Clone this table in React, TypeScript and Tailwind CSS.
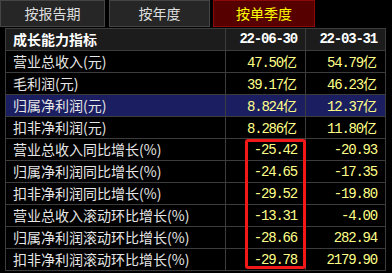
import React from 'react'

const rows = [
  { label: '营业总收入(元)', a: '47.50亿', b: '54.79亿' },
  { label: '毛利润(元)', a: '39.17亿', b: '46.23亿' },
  { label: '归属净利润(元)', a: '8.824亿', b: '12.37亿', active: true },
  { label: '扣非净利润(元)', a: '8.286亿', b: '11.80亿' },
  { label: '营业总收入同比增长(%)', a: '-25.42', b: '-20.93' },
  { label: '归属净利润同比增长(%)', a: '-24.65', b: '-17.35' },
  { label: '扣非净利润同比增长(%)', a: '-29.52', b: '-19.80' },
  { label: '营业总收入滚动环比增长(%)', a: '-13.31', b: '-4.00' },
  { label: '归属净利润滚动环比增长(%)', a: '-28.66', b: '282.94' },
  { label: '扣非净利润滚动环比增长(%)', a: '-29.78', b: '2179.90' },
]

const cjk = { fontFamily: '"Noto Sans CJK SC", sans-serif' }
const num = { fontFamily: '"Liberation Mono", "Noto Sans CJK SC", monospace' }

function Value({ text }: { text: string }) {
  const yi = text.endsWith('亿')
  const n = yi ? text.slice(0, -1) : text
  return (
    <span className="flex items-baseline text-[14px] leading-[20px] text-[#ffff88]">
      <span style={num} className="tracking-[-1.2px]">
        {n}
      </span>
      {yi && <span style={cjk}>亿</span>}
    </span>
  )
}

export default function App() {
  return (
    <div className="relative h-[273px] w-[392px] overflow-hidden bg-black" style={cjk}>
      <div className="flex h-[27px]">
        <div className="flex w-[105px] items-center justify-center border border-[#454545] bg-[#262626] text-[14px] text-[#dedede]">
          按报告期
        </div>
        <div className="ml-[4px] flex w-[101px] items-center justify-center border border-[#454545] bg-[#262626] text-[14px] text-[#dedede]">
          按年度
        </div>
        <div className="ml-[3px] flex w-[102px] items-center justify-center border border-[#8a0a0a] bg-[#560000] text-[14px] text-[#ffff00]">
          按单季度
        </div>
      </div>

      <div className="relative ml-[5px] mt-[1px] w-[381px] border-l border-t border-[#3c3c3c]">
        <div className="flex h-[22px] border-b border-[#3c3c3c] bg-[#1c1c1c]">
          <div className="flex w-[220px] items-center border-r border-[#3c3c3c] pl-[7px] text-[14px] font-bold text-white">
            成长能力指标
          </div>
          <div
            style={num}
            className="flex w-[80px] items-center justify-end border-r border-[#3c3c3c] pr-2 text-[14px] font-bold tracking-[-1.2px] text-white"
          >
            22-06-30
          </div>
          <div
            style={num}
            className="flex w-[80px] items-center justify-end border-r border-[#3c3c3c] pr-2 text-[14px] font-bold tracking-[-1.2px] text-white"
          >
            22-03-31
          </div>
        </div>

        {rows.map((r, i) => (
          <div
            key={i}
            className={`flex h-[22px] border-b border-[#3c3c3c] ${r.active ? 'bg-[#1b1f62]' : 'bg-black'}`}
          >
            <div className="flex w-[220px] items-center border-r border-[#3c3c3c] pl-[7px] text-[14px] text-[#e6e6e6]">
              {r.label}
            </div>
            <div className="flex w-[80px] items-center justify-end border-r border-[#3c3c3c] pr-2">
              <Value text={r.a} />
            </div>
            <div className="flex w-[80px] items-center justify-end border-r border-[#3c3c3c] pr-2">
              <Value text={r.b} />
            </div>
          </div>
        ))}

        <div className="pointer-events-none absolute left-[239px] top-[110px] h-[130px] w-[61px] rounded-[3px] border-[3px] border-[#f21818]" />
      </div>
    </div>
  )
}
